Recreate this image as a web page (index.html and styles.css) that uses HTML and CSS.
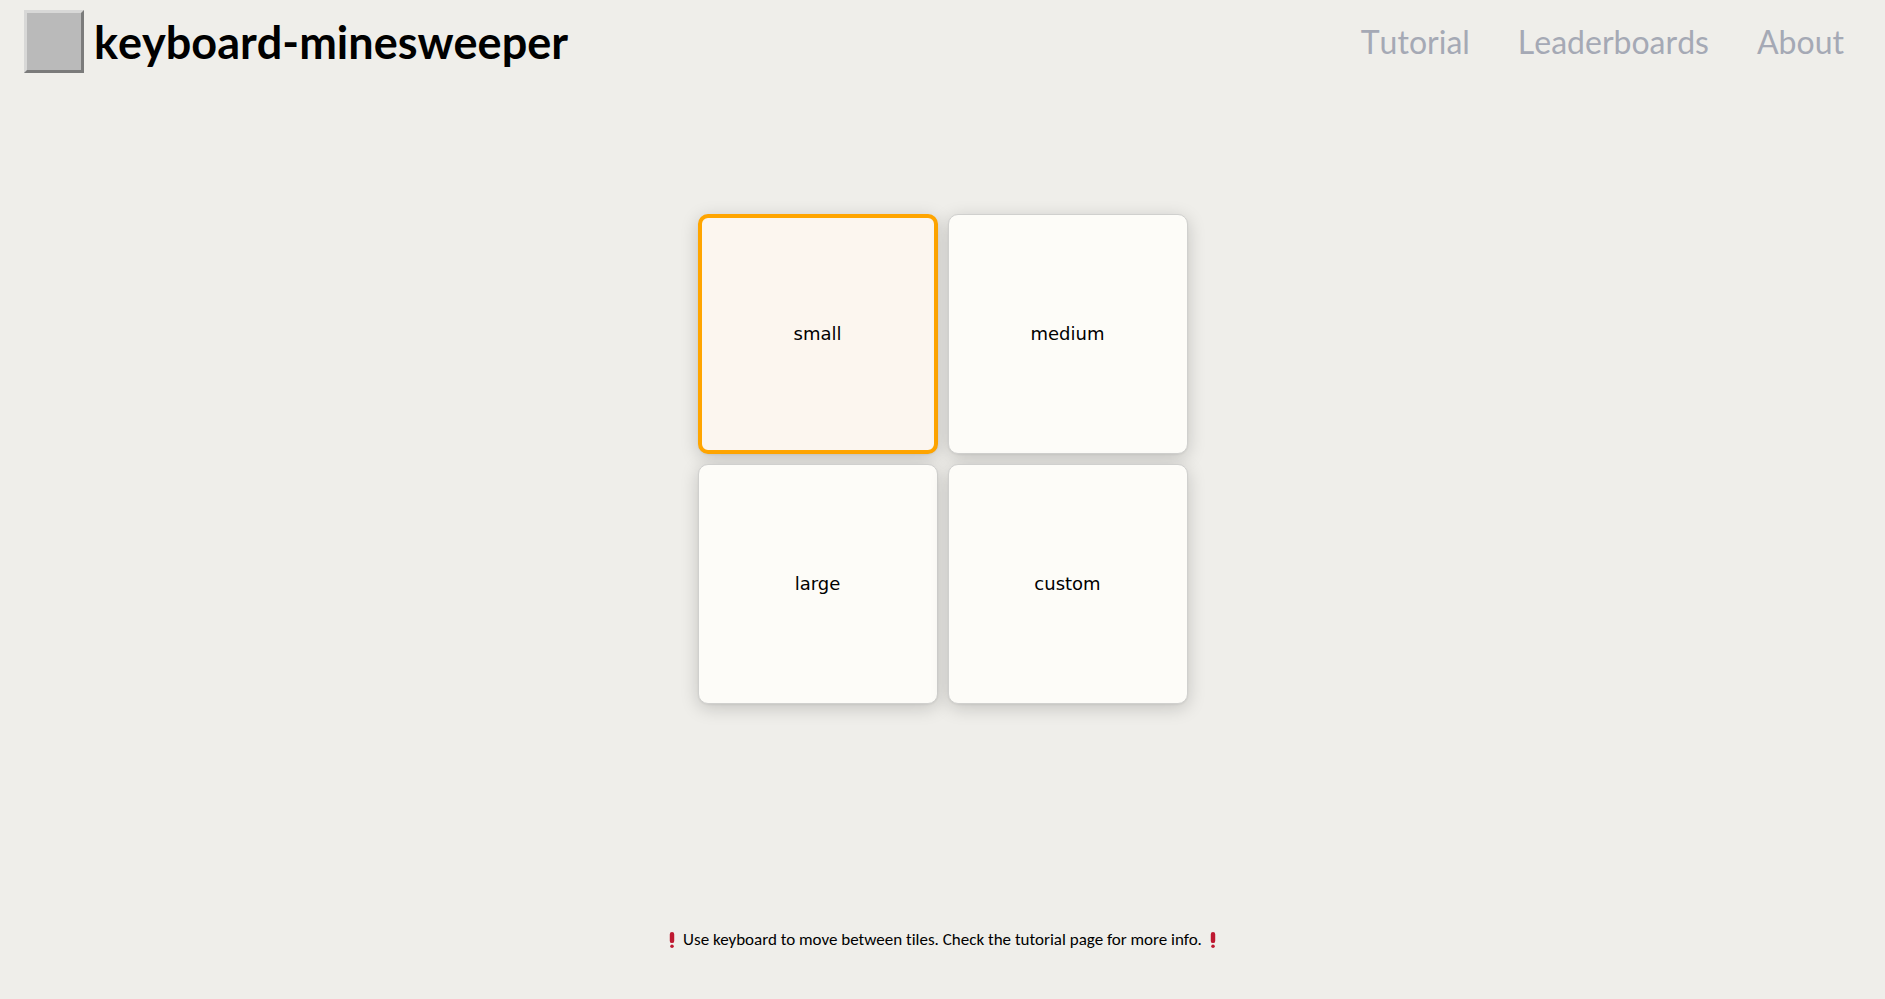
FILE: index.html
```html
<!DOCTYPE html>
<html lang="en">
<head>
<meta charset="utf-8">
<title>keyboard-minesweeper</title>
<link rel="stylesheet" href="styles.css">
</head>
<body>
<header class="header">
  <div class="brand">
    <div class="brand-tile"></div>
    <h1 class="brand-name">keyboard-minesweeper</h1>
  </div>
  <nav class="nav">
    <a class="nav-link" href="#tutorial">Tutorial</a>
    <a class="nav-link" href="#leaderboards">Leaderboards</a>
    <a class="nav-link" href="#about">About</a>
  </nav>
</header>
<main class="main">
  <div class="tiles">
    <button class="tile tile-selected" type="button">small</button>
    <button class="tile" type="button">medium</button>
    <button class="tile" type="button">large</button>
    <button class="tile" type="button">custom</button>
  </div>
</main>
<footer class="footer">
  <svg class="mark" viewBox="0 0 36 36" aria-hidden="true"><circle cx="18" cy="32" r="4"/><path d="M23 20a5 5 0 0 1-10 0V5a5 5 0 0 1 10 0z"/></svg>
  <p class="hint">Use keyboard to move between tiles. Check the tutorial page for more info.</p>
  <svg class="mark" viewBox="0 0 36 36" aria-hidden="true"><circle cx="18" cy="32" r="4"/><path d="M23 20a5 5 0 0 1-10 0V5a5 5 0 0 1 10 0z"/></svg>
</footer>
</body>
</html>
```

FILE: styles.css
```css
* {
  box-sizing: border-box;
}

body {
  margin: 0;
  min-height: 100vh;
  display: flex;
  flex-direction: column;
  background: #efeeea;
  color: #000;
  font-family: Lato, sans-serif;
  font-kerning: none;
  font-variant-ligatures: none;
}

.header {
  display: flex;
  align-items: center;
  justify-content: space-between;
  padding: 10px 41px 10px 24px;
}

.brand {
  display: flex;
  align-items: center;
  gap: 10px;
}

.brand-tile {
  width: 60px;
  height: 63px;
  background: #bababa;
  border: 3px solid;
  border-color: #d8d8d7 #7b7b7b #7b7b7b #d8d8d7;
}

.brand-name {
  margin: 0;
  font-size: 45px;
  line-height: 56px;
}

.nav {
  display: flex;
  gap: 48px;
}

.nav-link {
  color: #a5a9b5;
  font-size: 32px;
  line-height: 40px;
  text-decoration: none;
}

.main {
  flex: 1;
  display: flex;
  align-items: center;
  justify-content: center;
  padding-bottom: 94px;
}

.tiles {
  display: grid;
  grid-template-columns: repeat(2, 240px);
  grid-auto-rows: 240px;
  gap: 10px;
}

.tile {
  padding: 0;
  border: 1px solid #d0d0ce;
  border-radius: 10px;
  background: #fdfcf8;
  color: #000;
  box-shadow: 0 1px 2px rgba(0, 0, 0, 0.05), 0 4px 18px rgba(0, 0, 0, 0.18);
  font-family: "DejaVu Sans", sans-serif;
  font-size: 18px;
}

.tile-selected {
  border: 4px solid #ffa500;
  background: #fcf6ef;
}

.footer {
  display: flex;
  align-items: center;
  justify-content: center;
  gap: 3px;
  padding: 0 24px 47px;
}

.mark {
  width: 16px;
  height: 16px;
  fill: #be1931;
}

.hint {
  margin: 0;
  font-family: Carlito, Lato, sans-serif;
  font-kerning: normal;
  font-size: 17px;
  line-height: 24px;
}
```
